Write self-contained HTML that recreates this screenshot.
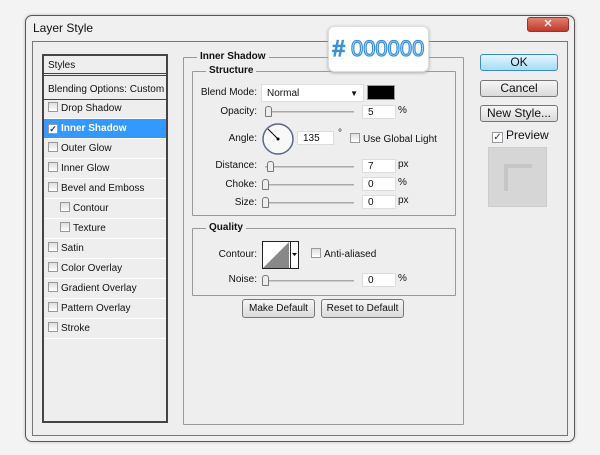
<!DOCTYPE html><html><head><style>
*{box-sizing:border-box;margin:0;padding:0}
body{width:600px;height:455px;background:#f4f3f3;font-family:"Liberation Sans",sans-serif;font-size:10px;color:#111;position:relative;overflow:hidden}
.a{position:absolute}
.win{left:25px;top:15px;width:550px;height:427px;border:1px solid #555;border-radius:7px;background:#f0f0f0;box-shadow:0 0 3px #bbb}
.panel{left:32px;top:41px;width:536px;height:395px;border:1px solid #777;background:#eee}
.list{left:42px;top:54px;width:126px;height:369px;border:2px solid #444;border-top-width:2px;background:#eee}
.row{position:absolute;left:0;width:122px;height:20px;border-bottom:1px solid #fff;line-height:19px;padding-left:4px}
.cb{display:inline-block;width:10px;height:10px;border:1px solid #999;background:linear-gradient(#ddd,#fff);vertical-align:-1px;margin-right:3px}
.grp{border:1px solid #999;border-radius:1px}
.lg{position:absolute;background:#eee;font-weight:bold;padding:0 3px;font-size:10px}
.lbl{position:absolute;text-align:right;width:80px}
.inp{position:absolute;background:#fff;border:1px solid #ddd;height:14px;padding-left:5px;line-height:13px}
.sl{position:absolute;height:2px;background:#ccc;border-top:1px solid #aaa}
.kn{position:absolute;width:7px;height:11px;border:1px solid #777;border-radius:3px 3px 1px 1px;background:#eee}
.btn{position:absolute;border:1px solid #777;border-radius:3px;background:linear-gradient(#f6f6f6,#dadada);text-align:center;font-size:11px}
</style></head><body>
<div class="a win"></div>
<div class="a" style="left:33px;top:21px;font-size:12px">Layer Style</div>
<div class="a" style="left:527px;top:17px;width:42px;height:15px;border-radius:3px;background:linear-gradient(#e08070,#c0392b);border:1px solid #8a3a30;color:#eee;text-align:center;font-weight:bold;font-size:11px;line-height:13px">✕</div>
<div class="a panel"></div>
<div class="a list">
<div class="row" style="top:0;height:20px;border-bottom:3px double #444">Styles</div>
<div class="row" style="top:24px;border-bottom:1px solid #444">Blending Options: Custom</div>
<div class="row" style="top:43px"><span class="cb"></span>Drop Shadow</div>
<div class="row" style="top:63px;background:#3399ff;color:#fff;font-weight:bold"><span class="cb" style="background:#fff;color:#236;font-size:9px;line-height:8px;text-align:center">✓</span>Inner Shadow</div>
<div class="row" style="top:83px"><span class="cb"></span>Outer Glow</div>
<div class="row" style="top:103px"><span class="cb"></span>Inner Glow</div>
<div class="row" style="top:123px"><span class="cb"></span>Bevel and Emboss</div>
<div class="row" style="top:143px;padding-left:16px"><span class="cb"></span>Contour</div>
<div class="row" style="top:163px;padding-left:16px"><span class="cb"></span>Texture</div>
<div class="row" style="top:183px"><span class="cb"></span>Satin</div>
<div class="row" style="top:203px"><span class="cb"></span>Color Overlay</div>
<div class="row" style="top:223px"><span class="cb"></span>Gradient Overlay</div>
<div class="row" style="top:243px"><span class="cb"></span>Pattern Overlay</div>
<div class="row" style="top:263px"><span class="cb"></span>Stroke</div>
</div>
<div class="a grp" style="left:183px;top:57px;width:281px;height:368px"></div>
<div class="lg" style="left:197px;top:51px">Inner Shadow</div>
<div class="a grp" style="left:192px;top:71px;width:264px;height:145px"></div>
<div class="lg" style="left:206px;top:65px">Structure</div>
<div class="lbl" style="left:177px;top:87px">Blend Mode:</div>
<div class="inp" style="left:261px;top:84px;width:103px;height:18px;line-height:18px">Normal<span style="position:absolute;right:5px;font-size:8px">▼</span></div>
<div class="a" style="left:367px;top:85px;width:28px;height:15px;background:#000;border:1px solid #999"></div>
<div class="lbl" style="left:177px;top:106px">Opacity:</div>
<div class="sl" style="left:265px;top:111px;width:89px"></div><div class="kn" style="left:265px;top:106px"></div>
<div class="inp" style="left:362px;top:105px;width:34px">5</div><div class="a" style="left:398px;top:105px">%</div>
<div class="lbl" style="left:177px;top:133px">Angle:</div>
<svg class="a" style="left:261px;top:123px" width="34" height="34"><circle cx="17" cy="16" r="15" fill="#f8f8f8" stroke="#56678f" stroke-width="1.5"/><line x1="7" y1="6" x2="17" y2="16" stroke="#000"/><circle cx="17" cy="16" r="1.5"/></svg>
<div class="inp" style="left:297px;top:131px;width:37px">135</div><div class="a" style="left:338px;top:128px">°</div>
<div class="a" style="left:350px;top:133px"><span class="cb"></span>Use Global Light</div>
<div class="lbl" style="left:177px;top:160px">Distance:</div>
<div class="sl" style="left:265px;top:166px;width:89px"></div><div class="kn" style="left:267px;top:161px"></div>
<div class="inp" style="left:362px;top:159px;width:34px">7</div><div class="a" style="left:398px;top:159px">px</div>
<div class="lbl" style="left:177px;top:179px">Choke:</div>
<div class="sl" style="left:262px;top:184px;width:92px"></div><div class="kn" style="left:262px;top:179px"></div>
<div class="inp" style="left:362px;top:177px;width:34px">0</div><div class="a" style="left:398px;top:177px">%</div>
<div class="lbl" style="left:177px;top:197px">Size:</div>
<div class="sl" style="left:262px;top:202px;width:92px"></div><div class="kn" style="left:262px;top:197px"></div>
<div class="inp" style="left:362px;top:195px;width:34px">0</div><div class="a" style="left:398px;top:195px">px</div>
<div class="a grp" style="left:192px;top:228px;width:264px;height:68px"></div>
<div class="lg" style="left:206px;top:222px">Quality</div>
<div class="lbl" style="left:177px;top:249px">Contour:</div>
<svg class="a" style="left:262px;top:241px" width="37" height="28"><rect x="0.5" y="0.5" width="36" height="27" fill="#fff" stroke="#222"/><polygon points="1,27 27,1 27,27" fill="#888"/><line x1="28.5" y1="0" x2="28.5" y2="28" stroke="#222"/><polygon points="30,12 35,12 32.5,15" fill="#000"/></svg>
<div class="a" style="left:311px;top:248px"><span class="cb"></span>Anti-aliased</div>
<div class="lbl" style="left:177px;top:274px">Noise:</div>
<div class="sl" style="left:262px;top:280px;width:92px"></div><div class="kn" style="left:262px;top:275px"></div>
<div class="inp" style="left:362px;top:273px;width:34px">0</div><div class="a" style="left:398px;top:273px">%</div>
<div class="btn" style="left:242px;top:299px;width:73px;height:19px;line-height:17px;font-size:10px">Make Default</div>
<div class="btn" style="left:321px;top:299px;width:83px;height:19px;line-height:17px;font-size:10px">Reset to Default</div>
<div class="btn" style="left:480px;top:54px;width:78px;height:17px;line-height:15px;background:linear-gradient(#e4f6ff,#a6dcf6);border-color:#3c8ec8;font-size:12px">OK</div>
<div class="btn" style="left:480px;top:80px;width:78px;height:17px;line-height:15px;font-size:12px">Cancel</div>
<div class="btn" style="left:480px;top:105px;width:78px;height:17px;line-height:15px;font-size:12px">New Style...</div>
<div class="a" style="left:492px;top:128px;font-size:12px;white-space:nowrap"><span class="cb" style="width:11px;height:11px;background:#fff;color:#236;font-size:10px;line-height:9px;text-align:center;vertical-align:-1px">✓</span>Preview</div>
<div class="a" style="left:488px;top:147px;width:59px;height:60px;background:#d6d6d6;border:1px solid #ccc"><div class="a" style="left:15px;top:16px;width:28px;height:27px;border-top:4px solid #c6c6c6;border-left:4px solid #c6c6c6"></div></div>
<div class="a" style="left:328px;top:26px;width:101px;height:46px;background:#fff;border:1px solid #ddd;border-radius:6px;box-shadow:0 1px 3px #aaa;text-align:center;line-height:44px;font-size:22px;color:#d2ebfb;-webkit-text-stroke:1.2px #3a8fd8">#&nbsp;000000</div>
</body></html>
